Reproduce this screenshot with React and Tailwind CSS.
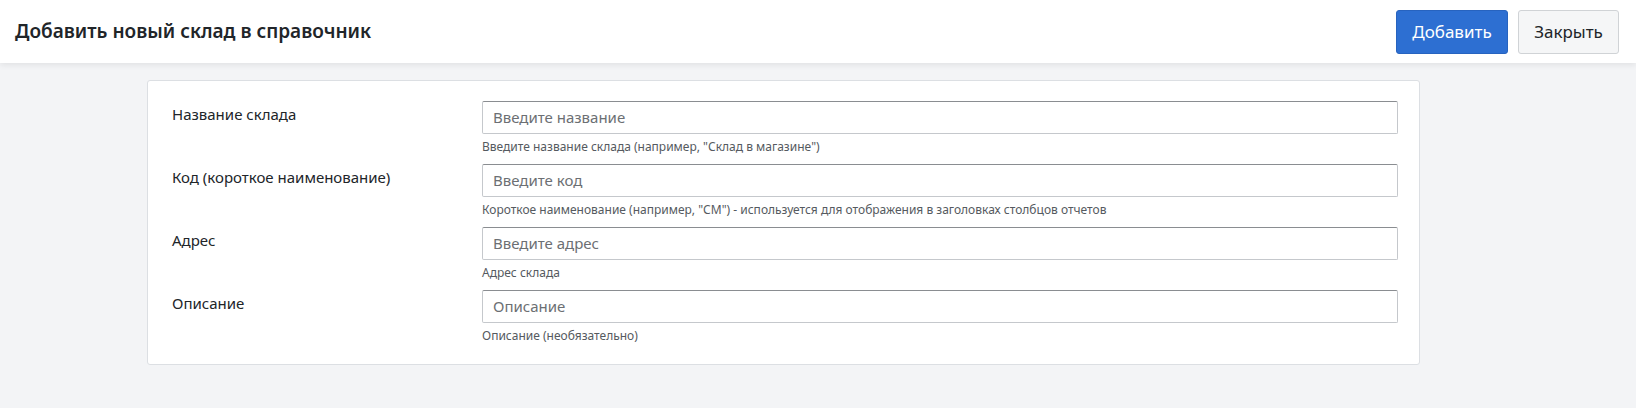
export default function App() {
  const rows = [
    ["Название склада", "Введите название", 'Введите название склада (например, "Склад в магазине")'],
    ["Код (короткое наименование)", "Введите код", 'Короткое наименование (например, "СМ") - используется для отображения в заголовках столбцов отчетов'],
    ["Адрес", "Введите адрес", "Адрес склада"],
    ["Описание", "Описание", "Описание (необязательно)"],
  ];
  return (
    <div className="w-[1636px] h-[408px] bg-[#f3f4f6] text-[#212529]" style={{ fontFamily: '"Segoe UI","Noto Sans","Open Sans",sans-serif' }}>
      <div className="h-[63px] bg-white flex items-center justify-between pl-[15px] pr-[17px] shadow-[0_2px_6px_rgba(0,0,0,0.08)]">
        <h1 className="text-[19px] font-semibold">Добавить новый склад в справочник</h1>
        <div className="flex gap-[10px]">
          <button className="h-[44px] w-[112px] rounded-[3px] bg-[#2d6fd2] border border-[#2763bf] text-white text-[17px]">Добавить</button>
          <button className="h-[44px] w-[101px] rounded-[3px] bg-[#f5f6f7] border border-[#d0d3d6] text-[17px]">Закрыть</button>
        </div>
      </div>
      <div className="pt-[17px] pl-[147px]">
        <div className="w-[1273px] bg-white border border-[#dcdfe3] rounded-[3px] pl-[24px] pr-[21px] pt-[20px] pb-[11px] flex flex-col">
          {rows.map(([l, p, h]) => (
            <div key={l} className="flex h-[63px]">
              <div className="w-[310px] text-[15px] pt-[2px]">{l}</div>
              <div className="flex-1">
                <div className="h-[33px] border border-[#c5c8cc] border-t-[#8a8d91] rounded-[2px] px-[10px] flex items-center text-[15px] text-[#6c6f73]">{p}</div>
                <div className="text-[12px] text-[#555a60] mt-[4px]">{h}</div>
              </div>
            </div>
          ))}
        </div>
      </div>
    </div>
  );
}
